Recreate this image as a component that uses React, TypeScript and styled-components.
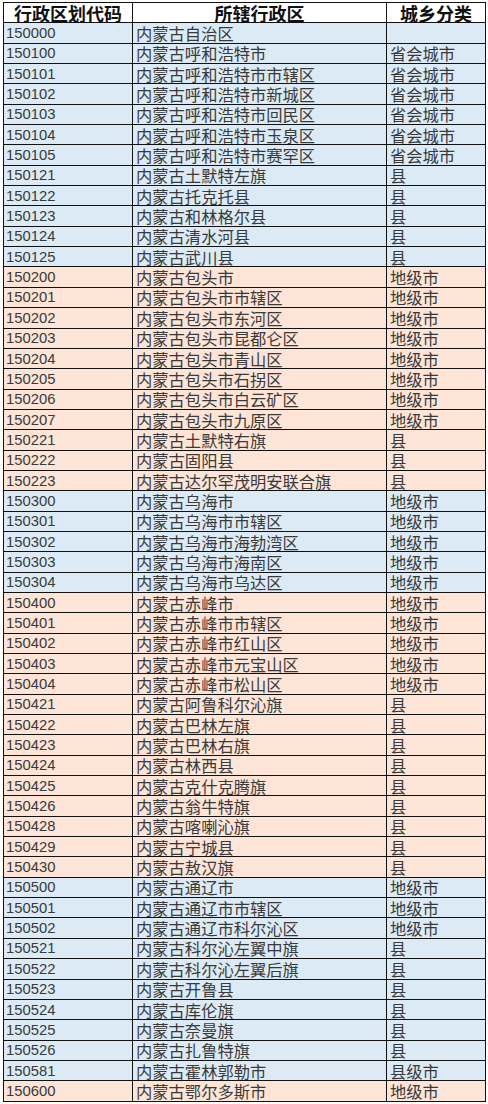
import React from "react";
import styled, { createGlobalStyle } from "styled-components";

const GlobalStyle = createGlobalStyle`
  html, body {
    margin: 0;
    padding: 0;
    background: #ffffff;
  }
`;

type Tone = "blue" | "peach";

const rows: [string, string, string, Tone][] = [
  ["150000", "内蒙古自治区", "", "blue"],
  ["150100", "内蒙古呼和浩特市", "省会城市", "blue"],
  ["150101", "内蒙古呼和浩特市市辖区", "省会城市", "blue"],
  ["150102", "内蒙古呼和浩特市新城区", "省会城市", "blue"],
  ["150103", "内蒙古呼和浩特市回民区", "省会城市", "blue"],
  ["150104", "内蒙古呼和浩特市玉泉区", "省会城市", "blue"],
  ["150105", "内蒙古呼和浩特市赛罕区", "省会城市", "blue"],
  ["150121", "内蒙古土默特左旗", "县", "blue"],
  ["150122", "内蒙古托克托县", "县", "blue"],
  ["150123", "内蒙古和林格尔县", "县", "blue"],
  ["150124", "内蒙古清水河县", "县", "blue"],
  ["150125", "内蒙古武川县", "县", "blue"],
  ["150200", "内蒙古包头市", "地级市", "peach"],
  ["150201", "内蒙古包头市市辖区", "地级市", "peach"],
  ["150202", "内蒙古包头市东河区", "地级市", "peach"],
  ["150203", "内蒙古包头市昆都仑区", "地级市", "peach"],
  ["150204", "内蒙古包头市青山区", "地级市", "peach"],
  ["150205", "内蒙古包头市石拐区", "地级市", "peach"],
  ["150206", "内蒙古包头市白云矿区", "地级市", "peach"],
  ["150207", "内蒙古包头市九原区", "地级市", "peach"],
  ["150221", "内蒙古土默特右旗", "县", "peach"],
  ["150222", "内蒙古固阳县", "县", "peach"],
  ["150223", "内蒙古达尔罕茂明安联合旗", "县", "peach"],
  ["150300", "内蒙古乌海市", "地级市", "blue"],
  ["150301", "内蒙古乌海市市辖区", "地级市", "blue"],
  ["150302", "内蒙古乌海市海勃湾区", "地级市", "blue"],
  ["150303", "内蒙古乌海市海南区", "地级市", "blue"],
  ["150304", "内蒙古乌海市乌达区", "地级市", "blue"],
  ["150400", "内蒙古赤峰市", "地级市", "peach"],
  ["150401", "内蒙古赤峰市市辖区", "地级市", "peach"],
  ["150402", "内蒙古赤峰市红山区", "地级市", "peach"],
  ["150403", "内蒙古赤峰市元宝山区", "地级市", "peach"],
  ["150404", "内蒙古赤峰市松山区", "地级市", "peach"],
  ["150421", "内蒙古阿鲁科尔沁旗", "县", "peach"],
  ["150422", "内蒙古巴林左旗", "县", "peach"],
  ["150423", "内蒙古巴林右旗", "县", "peach"],
  ["150424", "内蒙古林西县", "县", "peach"],
  ["150425", "内蒙古克什克腾旗", "县", "peach"],
  ["150426", "内蒙古翁牛特旗", "县", "peach"],
  ["150428", "内蒙古喀喇沁旗", "县", "peach"],
  ["150429", "内蒙古宁城县", "县", "peach"],
  ["150430", "内蒙古敖汉旗", "县", "peach"],
  ["150500", "内蒙古通辽市", "地级市", "blue"],
  ["150501", "内蒙古通辽市市辖区", "地级市", "blue"],
  ["150502", "内蒙古通辽市科尔沁区", "地级市", "blue"],
  ["150521", "内蒙古科尔沁左翼中旗", "县", "blue"],
  ["150522", "内蒙古科尔沁左翼后旗", "县", "blue"],
  ["150523", "内蒙古开鲁县", "县", "blue"],
  ["150524", "内蒙古库伦旗", "县", "blue"],
  ["150525", "内蒙古奈曼旗", "县", "blue"],
  ["150526", "内蒙古扎鲁特旗", "县", "blue"],
  ["150581", "内蒙古霍林郭勒市", "县级市", "blue"],
  ["150600", "内蒙古鄂尔多斯市", "地级市", "peach"],
];

const Sheet = styled.div`
  padding: 2px 3px 0 3px;
`;

const Table = styled.div`
  width: 482px;
  border-left: 1px solid #111;
  border-top: 1px solid #111;
`;

const Row = styled.div<{ $tone?: Tone }>`
  display: grid;
  grid-template-columns: 129px 254px 99px;
  height: 20.35px;
  box-sizing: border-box;
  background: ${(p) =>
    p.$tone === "blue" ? "#dbeaf4" : p.$tone === "peach" ? "#fce4d6" : "#ffffff"};
`;

const Cell = styled.div<{ $head?: boolean; $code?: boolean }>`
  box-sizing: border-box;
  border-right: 1px solid #111;
  border-bottom: 1px solid #111;
  display: flex;
  align-items: center;
  justify-content: ${(p) => (p.$head ? "center" : "flex-start")};
  padding-left: ${(p) => (p.$head ? "0" : p.$code ? "2px" : "3px")};
  white-space: nowrap;
  color: ${(p) => (p.$head ? "#111" : "#3a3a3a")};
  font-family: ${(p) =>
    p.$code
      ? '"Liberation Sans", Arial, sans-serif'
      : '"Noto Sans CJK SC", "Noto Sans", sans-serif'};
  font-size: ${(p) => (p.$head ? "18px" : p.$code ? "14.8px" : "16.3px")};
  font-weight: ${(p) => (p.$head ? 700 : 400)};
  line-height: 16px;
`;

export default function App() {
  return (
    <Sheet>
      <GlobalStyle />
      <Table>
        <Row>
          <Cell $head>行政区划代码</Cell>
          <Cell $head>所辖行政区</Cell>
          <Cell $head>城乡分类</Cell>
        </Row>
        {rows.map(([code, name, kind, tone]) => (
          <Row key={code} $tone={tone}>
            <Cell $code>{code}</Cell>
            <Cell>{name}</Cell>
            <Cell>{kind}</Cell>
          </Row>
        ))}
      </Table>
    </Sheet>
  );
}
